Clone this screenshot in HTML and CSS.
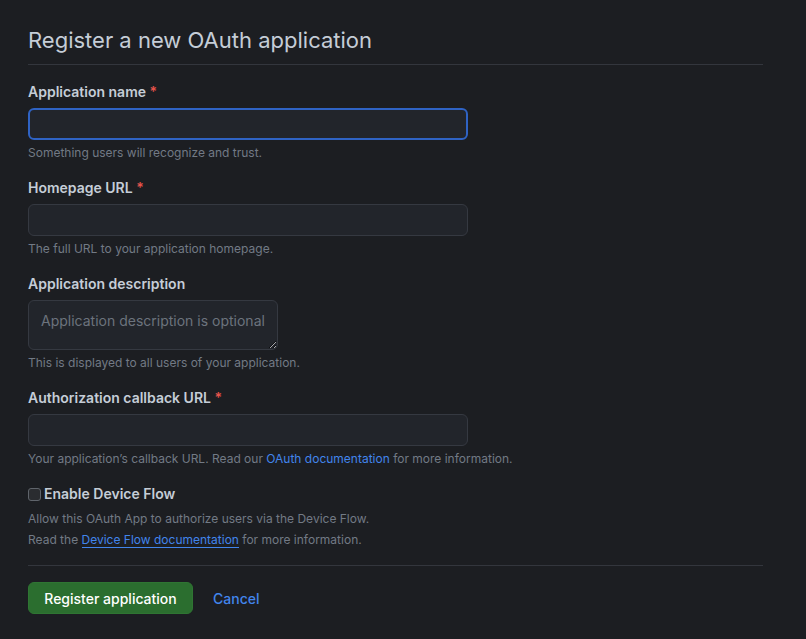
FILE: index.html
```html
<!DOCTYPE html>
<html lang="en">
<head>
    <meta charset="UTF-8">
    <title>Register a new OAuth application</title>
    <link rel="stylesheet" href="styles.css">
</head>
<body>
<div class="page">
    <h1 class="subhead">Register a new OAuth application</h1>
    <form class="appForm">
        <div class="formGroup">
            <label class="label">Application name <span class="req">*</span></label>
            <input class="field focused" type="text">
            <p class="note">Something users will recognize and trust.</p>
        </div>
        <div class="formGroup">
            <label class="label">Homepage URL <span class="req">*</span></label>
            <input class="field" type="text">
            <p class="note">The full URL to your application homepage.</p>
        </div>
        <div class="formGroup">
            <label class="label">Application description</label>
            <textarea class="field area" placeholder="Application description is optional"></textarea>
            <p class="note">This is displayed to all users of your application.</p>
        </div>
        <div class="formGroup">
            <label class="label">Authorization callback URL <span class="req">*</span></label>
            <input class="field" type="text">
            <p class="note">Your application’s callback URL. Read our <a href="#">OAuth documentation</a> for more information.</p>
        </div>
        <div class="formGroup check">
            <label class="label checkLabel"><input type="checkbox" class="box"> Enable Device Flow</label>
            <p class="note">Allow this OAuth App to authorize users via the Device Flow.</p>
            <p class="note">Read the <a href="#" class="under">Device Flow documentation</a> for more information.</p>
        </div>
        <div class="actions">
            <button type="button" class="btnPrimary">Register application</button>
            <a href="#" class="cancel">Cancel</a>
        </div>
    </form>
</div>
</body>
</html>
```

FILE: styles.css
```css
*{
    margin: 0;
    padding: 0;
    box-sizing: border-box;
}
html,body{
    background-color: #1c1e22;
}
body{
    font-family: Inter, "Noto Sans", sans-serif;
    color: #c5cdd7;
    font-size: 14px;
}
a{
    color: #4285ec;
    text-decoration: none;
}
.page{
    width: 735px;
    margin-left: 28px;
    padding-top: 22px;
}
.subhead{
    font-size: 22px;
    font-weight: 400;
    line-height: 36px;
    padding-bottom: 6px;
    border-bottom: 1px solid #33363d;
    margin-bottom: 17px;
}
.formGroup{
    display: flex;
    flex-direction: column;
    align-items: flex-start;
    margin-bottom: 16px;
}
.label{
    font-weight: 600;
    line-height: 20px;
    margin-bottom: 6px;
}
.req{
    color: #e5534b;
}
.field{
    width: 440px;
    height: 32px;
    background-color: #22252b;
    border: 1px solid #353941;
    border-radius: 6px;
    color: #c5cdd7;
    font-family: inherit;
    font-size: 14px;
    padding: 5px 12px;
    outline: none;
}
/*聚焦状态的输入框*/
.field.focused{
    border: 2px solid #2f63c4;
}
.area{
    width: 250px;
    height: 50px;
    padding: 10px 12px;
    line-height: 20px;
    font-size: 14px;
    resize: vertical;
}
.area::placeholder{
    color: #6c737d;
}
.note{
    font-size: 12px;
    line-height: 18px;
    color: #727a85;
    margin-top: 4px;
}
.check .note{
    line-height: 21px;
    margin-top: 4px;
}
.check .note + .note{
    margin-top: 0;
}
.checkLabel{
    display: flex;
    align-items: center;
    margin-bottom: 0;
}
.box{
    appearance: none;
    width: 13px;
    height: 13px;
    border: 1px solid #5f646b;
    border-radius: 3px;
    background-color: #2a2c30;
    margin-right: 3px;
}
.under{
    border-bottom: 1px solid #4285ec;
}
.check{
    margin-bottom: 15px;
}
.actions{
    border-top: 1px solid #33363d;
    padding-top: 16px;
    display: flex;
    align-items: center;
}
.btnPrimary{
    height: 32px;
    width: 165px;
    background-color: #2b6e2f;
    color: #ffffff;
    border: 1px solid #2f7533;
    border-radius: 6px;
    font-family: inherit;
    font-size: 14px;
    font-weight: 500;
}
.cancel{
    margin-left: 20px;
    font-weight: 500;
}
```
